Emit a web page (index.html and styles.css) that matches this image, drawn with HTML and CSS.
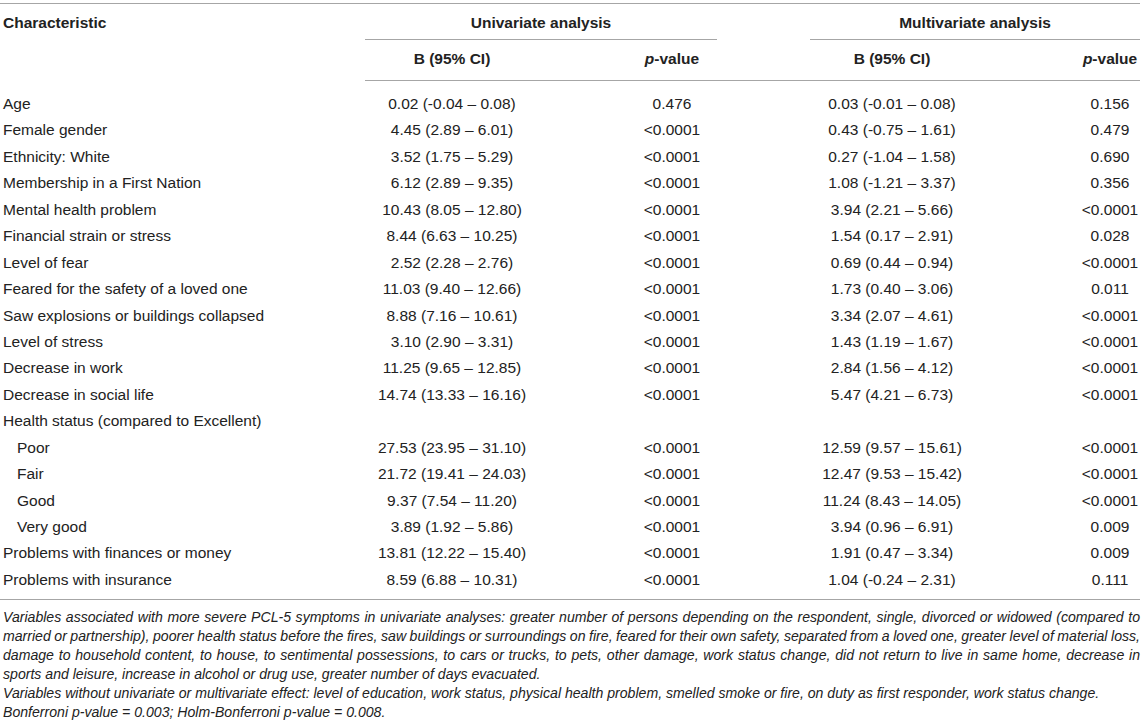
FILE: index.html
```html
<!DOCTYPE html>
<html>
<head>
  <title>PCL-5 symptoms: univariate and multivariate analysis</title>
  <meta charset="UTF-8" />
  <link rel="stylesheet" href="styles.css">
</head>
<body>
  <table class="results">
    <colgroup>
      <col class="c-char">
      <col class="c-b">
      <col class="c-p">
      <col class="c-gap">
      <col class="c-b2">
      <col class="c-p2">
    </colgroup>
    <thead>
      <tr class="group-row">
        <th rowspan="2" class="char">Characteristic</th>
        <th colspan="2"><div class="group">Univariate analysis</div></th>
        <th></th>
        <th colspan="2"><div class="group">Multivariate analysis</div></th>
      </tr>
      <tr class="sub-row">
        <th>B (95% CI)</th>
        <th class="p"><i>p</i>-value</th>
        <th></th>
        <th>B (95% CI)</th>
        <th class="p2"><i>p</i>-value</th>
      </tr>
    </thead>
    <tbody>
      <tr><td class="char">Age</td><td>0.02 (-0.04 – 0.08)</td><td class="p">0.476</td><td></td><td>0.03 (-0.01 – 0.08)</td><td class="p2">0.156</td></tr>
      <tr><td class="char">Female gender</td><td>4.45 (2.89 – 6.01)</td><td class="p">&lt;0.0001</td><td></td><td>0.43 (-0.75 – 1.61)</td><td class="p2">0.479</td></tr>
      <tr><td class="char">Ethnicity: White</td><td>3.52 (1.75 – 5.29)</td><td class="p">&lt;0.0001</td><td></td><td>0.27 (-1.04 – 1.58)</td><td class="p2">0.690</td></tr>
      <tr><td class="char">Membership in a First Nation</td><td>6.12 (2.89 – 9.35)</td><td class="p">&lt;0.0001</td><td></td><td>1.08 (-1.21 – 3.37)</td><td class="p2">0.356</td></tr>
      <tr><td class="char">Mental health problem</td><td>10.43 (8.05 – 12.80)</td><td class="p">&lt;0.0001</td><td></td><td>3.94 (2.21 – 5.66)</td><td class="p2">&lt;0.0001</td></tr>
      <tr><td class="char">Financial strain or stress</td><td>8.44 (6.63 – 10.25)</td><td class="p">&lt;0.0001</td><td></td><td>1.54 (0.17 – 2.91)</td><td class="p2">0.028</td></tr>
      <tr><td class="char">Level of fear</td><td>2.52 (2.28 – 2.76)</td><td class="p">&lt;0.0001</td><td></td><td>0.69 (0.44 – 0.94)</td><td class="p2">&lt;0.0001</td></tr>
      <tr><td class="char">Feared for the safety of a loved one</td><td>11.03 (9.40 – 12.66)</td><td class="p">&lt;0.0001</td><td></td><td>1.73 (0.40 – 3.06)</td><td class="p2">0.011</td></tr>
      <tr><td class="char">Saw explosions or buildings collapsed</td><td>8.88 (7.16 – 10.61)</td><td class="p">&lt;0.0001</td><td></td><td>3.34 (2.07 – 4.61)</td><td class="p2">&lt;0.0001</td></tr>
      <tr><td class="char">Level of stress</td><td>3.10 (2.90 – 3.31)</td><td class="p">&lt;0.0001</td><td></td><td>1.43 (1.19 – 1.67)</td><td class="p2">&lt;0.0001</td></tr>
      <tr><td class="char">Decrease in work</td><td>11.25 (9.65 – 12.85)</td><td class="p">&lt;0.0001</td><td></td><td>2.84 (1.56 – 4.12)</td><td class="p2">&lt;0.0001</td></tr>
      <tr><td class="char">Decrease in social life</td><td>14.74 (13.33 – 16.16)</td><td class="p">&lt;0.0001</td><td></td><td>5.47 (4.21 – 6.73)</td><td class="p2">&lt;0.0001</td></tr>
      <tr><td class="char">Health status (compared to Excellent)</td><td></td><td class="p"></td><td></td><td></td><td class="p2"></td></tr>
      <tr><td class="char sub">Poor</td><td>27.53 (23.95 – 31.10)</td><td class="p">&lt;0.0001</td><td></td><td>12.59 (9.57 – 15.61)</td><td class="p2">&lt;0.0001</td></tr>
      <tr><td class="char sub">Fair</td><td>21.72 (19.41 – 24.03)</td><td class="p">&lt;0.0001</td><td></td><td>12.47 (9.53 – 15.42)</td><td class="p2">&lt;0.0001</td></tr>
      <tr><td class="char sub">Good</td><td>9.37 (7.54 – 11.20)</td><td class="p">&lt;0.0001</td><td></td><td>11.24 (8.43 – 14.05)</td><td class="p2">&lt;0.0001</td></tr>
      <tr><td class="char sub">Very good</td><td>3.89 (1.92 – 5.86)</td><td class="p">&lt;0.0001</td><td></td><td>3.94 (0.96 – 6.91)</td><td class="p2">0.009</td></tr>
      <tr><td class="char">Problems with finances or money</td><td>13.81 (12.22 – 15.40)</td><td class="p">&lt;0.0001</td><td></td><td>1.91 (0.47 – 3.34)</td><td class="p2">0.009</td></tr>
      <tr><td class="char">Problems with insurance</td><td>8.59 (6.88 – 10.31)</td><td class="p">&lt;0.0001</td><td></td><td>1.04 (-0.24 – 2.31)</td><td class="p2">0.111</td></tr>
    </tbody>
  </table>

  <!-- Table notes -->
  <div class="notes">
    <p>
      <span class="ln">Variables associated with more severe PCL-5 symptoms in univariate analyses: greater number of persons depending on the respondent, single, divorced or widowed (compared to</span>
      <span class="ln">married or partnership), poorer health status before the fires, saw buildings or surroundings on fire, feared for their own safety, separated from a loved one, greater level of material loss,</span>
      <span class="ln">damage to household content, to house, to sentimental possessions, to cars or trucks, to pets, other damage, work status change, did not return to live in same home, decrease in</span>
      sports and leisure, increase in alcohol or drug use, greater number of days evacuated.
    </p>
    <p>Variables without univariate or multivariate effect: level of education, work status, physical health problem, smelled smoke or fire, on duty as first responder, work status change.</p>
    <p>Bonferroni p-value = 0.003; Holm-Bonferroni p-value = 0.008.</p>
  </div>
</body>
</html>
```

FILE: styles.css
```css
body {
  margin: 0;
  padding: 3px 3px 0 0;
  font-family: "Liberation Sans", Arial, sans-serif;
  color: #222;
  background: #fff;
}
.results {
  width: 1140px;
  table-layout: fixed;
  border-collapse: collapse;
  border-top: 1px solid #a6a6a6;
  border-bottom: 1px solid #a6a6a6;
  font-size: 15.5px;
}
.c-char { width: 365px; }
.c-b { width: 174px; }
.c-p { width: 178px; }
.c-gap { width: 93px; }
.c-b2 { width: 164px; }
.c-p2 { width: 166px; }

th, td {
  padding: 0;
  text-align: center;
  white-space: nowrap;
  font-weight: normal;
}
th { font-weight: bold; }
th i { font-style: italic; }
.char { text-align: left; padding-left: 3px; }
.p { padding-left: 88px; }
.p2 { padding-left: 106px; }

thead th { line-height: 18px; }
.group-row th { padding-top: 10px; vertical-align: top; }
.group-row th .group {
  padding-bottom: 7px;
  border-bottom: 1px solid #a6a6a6;
}
.sub-row th {
  padding-top: 10px;
  padding-bottom: 12px;
  border-bottom: 1px solid #a6a6a6;
}

tbody td {
  line-height: 18.44px;
  padding-top: 4px;
  padding-bottom: 4px;
}
tbody tr:first-child td { padding-top: 14px; }
tbody tr:last-child td { padding-bottom: 10px; }
tbody td.char { padding-left: 3px; }
tbody td.sub { padding-left: 17px; }

.notes {
  width: 1137px;
  padding: 8px 0 0 3px;
  font-size: 14.1px;
  line-height: 19px;
  font-style: italic;
}
.notes p { margin: 0; }
.notes .ln {
  display: block;
  white-space: nowrap;
  word-spacing: -1.5px;
  text-align: justify;
  text-align-last: justify;
}
```
